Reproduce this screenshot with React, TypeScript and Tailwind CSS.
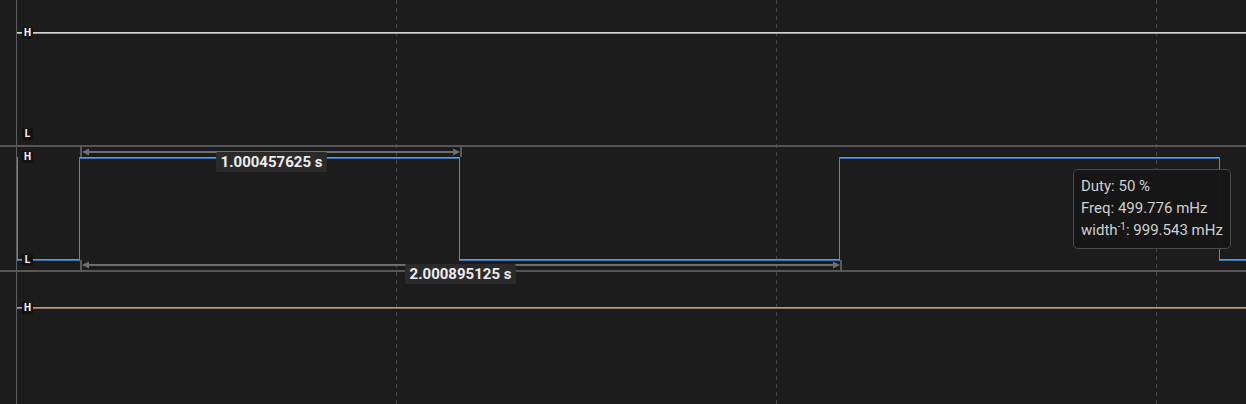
import React from "react";

const BLUE = "#4a8bd0";

function Level({ text, top }: { text: string; top: number }) {
  return (
    <div
      className="absolute left-[22px] flex h-[12px] w-[11px] items-center justify-center bg-[#121212] text-[10px] font-bold leading-none text-white"
      style={{ top: top - 6 }}
    >
      {text}
    </div>
  );
}

function Grid() {
  return (
    <svg className="absolute inset-0" width={1246} height={404} shapeRendering="crispEdges">
      <rect x={16} y={0} width={1} height={404} fill="#5c5c63" />
      {[396, 776, 1156].map((x) => (
        <line key={x} x1={x + 0.5} y1={0} x2={x + 0.5} y2={404} stroke="#474747" strokeWidth={1} strokeDasharray="4 4" />
      ))}
    </svg>
  );
}

function Annotations() {
  const c = "#6e6e6e";
  const t = "#5a5a5a";
  return (
    <svg className="pointer-events-none absolute inset-0" width={1246} height={404}>
      <rect x={80} y={147} width={2} height={10} fill={t} shapeRendering="crispEdges" />
      <rect x={460} y={147} width={2} height={10} fill={t} shapeRendering="crispEdges" />
      <rect x={84} y={151} width={372} height={2} fill={c} shapeRendering="crispEdges" />
      <polygon points="82,152 89,148.5 89,155.5" fill={c} />
      <polygon points="460,152 453,148.5 453,155.5" fill={c} />
      <rect x={80} y={260} width={2} height={10} fill={t} shapeRendering="crispEdges" />
      <rect x={840} y={260} width={2} height={10} fill={t} shapeRendering="crispEdges" />
      <rect x={84} y={264} width={752} height={2} fill={c} shapeRendering="crispEdges" />
      <polygon points="82,265 89,261.5 89,268.5" fill={c} />
      <polygon points="840,265 833,261.5 833,268.5" fill={c} />
    </svg>
  );
}

function Row1() {
  return (
    <div className="relative h-[145px] w-full">
      <svg className="absolute inset-0" width={1246} height={145} shapeRendering="crispEdges">
        <rect x={17} y={32} width={1229} height={1} fill="#d2d2d2" />
        <rect x={17} y={33} width={1229} height={1} fill="#9a9a9a" />
      </svg>
      <Level text="H" top={33} />
      <Level text="L" top={134} />
    </div>
  );
}

function Row2() {
  const hi = 10;
  const lo = 112;
  const edges = [17, 79, 459, 839, 1219];
  const segs: [number, number, number][] = [
    [17, 79, lo],
    [79, 459, hi],
    [459, 839, lo],
    [839, 1219, hi],
    [1219, 1246, lo],
  ];
  return (
    <div className="relative h-[123px] w-full">
      <svg className="absolute inset-0" width={1246} height={123} shapeRendering="crispEdges">
        {segs.map(([a, b, y], i) => (
          <g key={i}>
            <rect x={a} y={y} width={b - a + 1} height={1} fill="#5a9be0" />
            <rect x={a} y={y + 1} width={b - a + 1} height={1} fill="#3a72b0" />
          </g>
        ))}
        {edges.map((x) => (
          <rect key={x} x={x} y={hi} width={1} height={lo - hi + 2} fill={BLUE} />
        ))}
      </svg>
      <Level text="H" top={10} />
      <Level text="L" top={113} />
    </div>
  );
}

function Row3() {
  return (
    <div className="relative w-full flex-1">
      <svg className="absolute inset-0" width={1246} height={132} shapeRendering="crispEdges">
        <rect x={17} y={35} width={1229} height={1} fill="#b89c88" />
        <rect x={17} y={36} width={1229} height={1} fill="#8e7262" />
      </svg>
      <Level text="H" top={36} />
    </div>
  );
}

export default function App() {
  return (
    <div
      className="relative h-[404px] w-[1246px] overflow-hidden bg-[#1c1c1c]"
      style={{ fontFamily: "Roboto, 'Liberation Sans', sans-serif" }}
    >
      <Grid />
      <div className="relative flex h-full flex-col">
        <Row1 />
        <div className="h-[2px] w-full bg-[#565656]" />
        <Row2 />
        <div className="h-[2px] w-full bg-[#565656]" />
        <Row3 />
      </div>
      <Annotations />
      <div className="absolute left-[216px] top-[152px] flex h-[20px] w-[111px] items-center justify-center rounded-[2px] bg-[#2a2a2a] text-[15px] font-bold text-[#ececec]">
        1.000457625 s
      </div>
      <div className="absolute left-[405px] top-[264px] flex h-[20px] w-[111px] items-center justify-center rounded-[2px] bg-[#2a2a2a] text-[15px] font-bold text-[#ececec]">
        2.000895125 s
      </div>
      <div className="absolute left-[1073px] top-[169px] w-[158px] rounded-[5px] border border-[#4a4a4a] bg-[#161616]/95 pb-[7px] pl-[7px] pt-[5px] text-[15px] leading-[22px] text-[#d0d0d0]">
        <div>Duty: 50 %</div>
        <div>Freq: 499.776 mHz</div>
        <div>
          width<sup className="text-[10px]">-1</sup>: 999.543 mHz
        </div>
      </div>
    </div>
  );
}
